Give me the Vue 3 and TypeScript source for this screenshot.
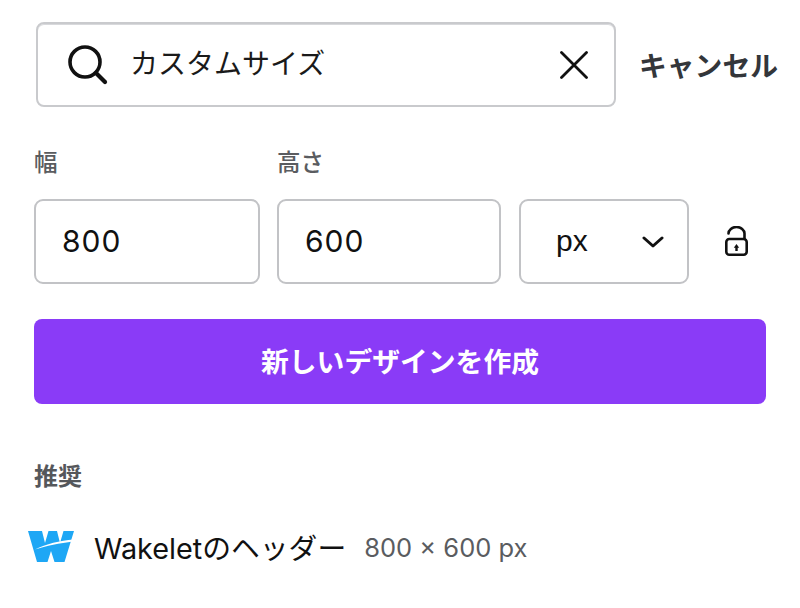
<script setup lang="ts">
const fields = [
  { label: '幅', value: '800' },
  { label: '高さ', value: '600' },
]
</script>

<template>
  <main class="page">
    <div class="search-row">
      <div class="search">
        <svg class="search-icon" viewBox="0 0 40 40" fill="none" stroke="#111" stroke-width="3.6" stroke-linecap="round">
          <circle cx="17" cy="17" r="15" />
          <path d="M28 28 L37 37" stroke-width="4.2" />
        </svg>
        <span class="query">カスタムサイズ</span>
        <svg class="close-icon" viewBox="0 0 28 28" fill="none" stroke="#111" stroke-width="2.8" stroke-linecap="round">
          <path d="M1.5 1.5 L26.5 26.5 M26.5 1.5 L1.5 26.5" />
        </svg>
      </div>
      <span class="cancel">キャンセル</span>
    </div>

    <div class="size-grid">
      <div v-for="f in fields" :key="f.label" class="field">
        <label class="label">{{ f.label }}</label>
        <div class="box"><span class="num">{{ f.value }}</span></div>
      </div>
      <div class="field unit">
        <div class="box unit-box">
          <span class="unit-text">px</span>
          <svg class="chev" viewBox="0 0 22 12" fill="none" stroke="#111" stroke-width="3" stroke-linecap="round" stroke-linejoin="round">
            <path d="M2 2 L11 10 L20 2" />
          </svg>
        </div>
      </div>
      <div class="lock-cell">
        <svg class="lock" viewBox="0 0 23 30" fill="none" stroke="#111" stroke-width="2.6" stroke-linecap="round">
          <path d="M3.5 7.5 A8 6.5 0 0 1 19.5 7.5 V13" />
          <rect x="1.3" y="13" width="20.4" height="15.7" rx="3" />
          <path d="M11.5 25 V21" stroke-width="2.4" stroke-linecap="butt" />
          <path d="M8.8 21.8 L11.5 18 L14.2 21.8 Z" fill="#111" stroke="none" />
        </svg>
      </div>
    </div>

    <button class="create" type="button">新しいデザインを作成</button>

    <h2 class="section">推奨</h2>

    <div class="suggestion">
      <svg class="logo" viewBox="0 0 46 32">
        <path fill="#1EA7F5" d="M0 1 H14 L17 13 L20.5 1 H29 L32 13 L35.5 1 H46 L36.5 32 H26.5 L23 21 L19.5 32 H9 Z" />
        <path fill="#fff" d="M7 19.5 C18 16 32 13 45 11.5 L45.5 9.5 C32 10.5 18 14 7 19.5 Z" />
      </svg>
      <span class="name">Wakeletのヘッダー</span>
      <span class="dims">800 × 600 px</span>
    </div>
  </main>
</template>

<style scoped>
.page {
  box-sizing: border-box;
  width: 800px;
  height: 608px;
  padding: 22px 34px 0;
  background: #fff;
  overflow: hidden;
  font-family: Inter, "Noto Sans CJK JP", sans-serif;
  color: #111;
}
.search-row {
  display: flex;
  align-items: center;
  margin-left: 2px;
}
.search {
  box-sizing: border-box;
  flex: none;
  width: 580px;
  height: 85px;
  display: flex;
  align-items: center;
  padding: 0 26px 0 30px;
  border: 2px solid #c9cacd;
  border-radius: 8px;
  box-shadow: inset 0 1px 0 #d8d9dc;
}
.search-icon {
  width: 40px;
  height: 40px;
  flex: none;
}
.query {
  margin-left: 22px;
  font-size: 28px;
  line-height: 40px;
  margin-bottom: 2px;
  flex: 1;
  color: #1a1a1a;
}
.close-icon {
  width: 28px;
  height: 28px;
  flex: none;
}
.cancel {
  margin-left: 23px;
  margin-top: 2px;
  font-size: 27.8px;
  font-weight: 700;
  line-height: 40px;
  color: #33363a;
  white-space: nowrap;
}
.size-grid {
  display: grid;
  grid-template-columns: 226px 224px 171px 1fr;
  column-gap: 17px;
  margin-top: 41px;
  align-items: end;
}
.field {
  display: flex;
  flex-direction: column;
}
.unit {
  margin-left: 1px;
}
.label {
  font-size: 23.5px;
  font-weight: 500;
  line-height: 30px;
  color: #5a5c60;
  margin-bottom: 21px;
}
.box {
  box-sizing: border-box;
  height: 85px;
  display: flex;
  align-items: center;
  padding: 0 26px;
  border: 2px solid #c2c3c6;
  border-radius: 9px;
  font-size: 30px;
  color: #111;
}
.num {
  letter-spacing: 1px;
  margin-bottom: 2px;
}
.unit-box {
  justify-content: space-between;
  padding: 0 23px 0 35px;
}
.unit-text {
  font-size: 30px;
  font-family: "Liberation Sans", sans-serif;
  margin-bottom: 2px;
}
.chev {
  width: 22px;
  height: 12px;
  flex: none;
}
.lock-cell {
  height: 85px;
  display: flex;
  align-items: center;
  padding-left: 19px;
  padding-bottom: 2px;
  box-sizing: border-box;
}
.lock {
  width: 23px;
  height: 30px;
}
.create {
  display: block;
  width: 732px;
  height: 85px;
  margin-top: 35px;
  padding: 0 0 4px;
  border: 0;
  border-radius: 8px;
  background: #8a3bf7;
  color: #fff;
  font-family: inherit;
  font-size: 27.8px;
  font-weight: 700;
}
.section {
  margin: 58px 0 0;
  font-size: 24px;
  font-weight: 700;
  line-height: 30px;
  color: #55575b;
}
.suggestion {
  display: flex;
  align-items: center;
  margin-top: 38px;
  margin-left: -6px;
  height: 32px;
}
.logo {
  width: 46px;
  height: 32px;
  flex: none;
}
.name {
  margin-left: 20px;
  font-size: 28.8px;
  color: #111;
  white-space: nowrap;
}
.dims {
  margin-left: 18px;
  margin-top: 2px;
  font-size: 25.5px;
  color: #5a5c60;
  white-space: nowrap;
}
</style>
